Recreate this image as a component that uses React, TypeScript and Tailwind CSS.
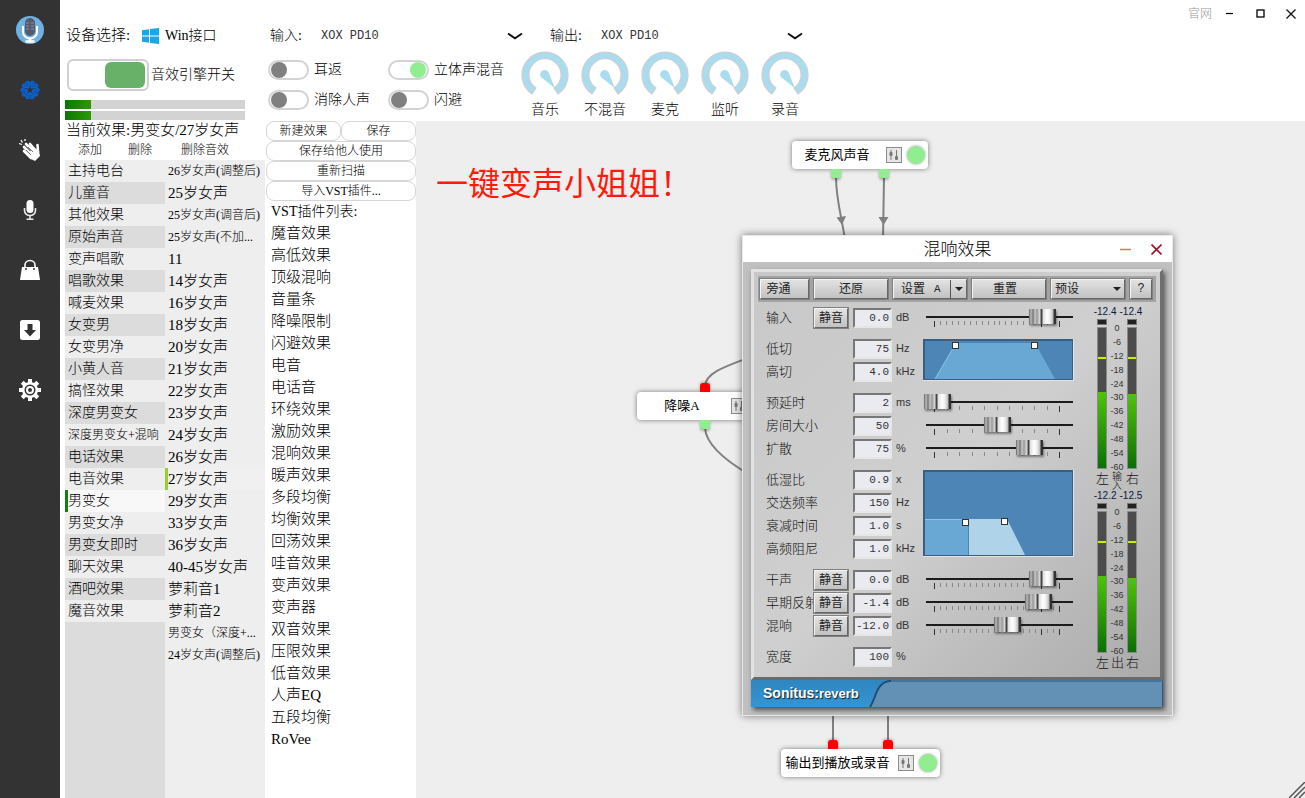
import { useState } from 'react';
import type { ReactNode } from 'react';

const categories = [
    '主持电台', '儿童音', '其他效果', '原始声音', '变声唱歌', '唱歌效果', '喊麦效果',
    '女变男', '女变男净', '小黄人音', '搞怪效果', '深度男变女', '深度男变女+混响', '电话效果',
    '电音效果', '男变女', '男变女净', '男变女即时', '聊天效果', '酒吧效果', '魔音效果',
];

const presets = [
    '26岁女声(调整后)', '25岁女声', '25岁女声(调音后)', '25岁女声(不加...', '11', '14岁女声', '16岁女声',
    '18岁女声', '20岁女声', '21岁女声', '22岁女声', '23岁女声', '24岁女声', '26岁女声',
    '27岁女声', '29岁女声', '33岁女声', '36岁女声', '40-45岁女声', '萝莉音1', '萝莉音2',
    '男变女（深度+...', '24岁女声(调整后)',
];

const plugins = [
    '魔音效果', '高低效果', '顶级混响', '音量条', '降噪限制', '闪避效果', '电音', '电话音',
    '环绕效果', '激励效果', '混响效果', '暖声效果', '多段均衡', '均衡效果', '回荡效果', '哇音效果',
    '变声效果', '变声器', '双音效果', '压限效果', '低音效果', '人声EQ', '五段均衡', 'RoVee',
];

const meterScale = [0, -6, -12, -18, -24, -30, -36, -42, -48, -54, -60];

function Sidebar() {
    const item = 'flex h-[60px] w-[60px] items-center justify-center';
    return (
        <nav className="w-[60px] shrink-0 bg-[#333333]">
            <button className={item} aria-label="logo">
                <svg width="28" height="28" viewBox="0 0 28 28">
                    <circle cx="14" cy="14" r="14" fill="#6fb2e2" />
                    <rect x="9" y="2" width="10" height="18" rx="5" fill="#555b6b" />
                    <path d="M10 7h3M15 7h3M10 10h3M15 10h3M10 13h3M15 13h3" stroke="#8b93a5" />
                    <path d="M7 10v6a7 6.500 0 0 0 14 0v-6" fill="none" stroke="#fff" strokeWidth="2" />
                    <path d="M14 22v3M9.500 25.500h9" stroke="#fff" strokeWidth="2.500" />
                </svg>
            </button>
            <button className={item} aria-label="effects">
                <svg width="22" height="22" viewBox="-11 -11 22 22">
                    {[36, 108, 180, 252, 324].map((a) => (
                        <g key={a} transform={`rotate(${a})`}>
                            <path d="M-.8 -2L-4.800 -6.500L-3.800 -9L-1.500 -9.300L0 -8.400L1.500 -9.300L3.800 -9L4.800 -6.500L.8 -2Z" fill="#0a62cc" />
                            <path d="M0 -4V-8.500M-1.200 -5L-2.300 -8M1.200 -5L2.300 -8" stroke="#123f78" strokeWidth=".5" />
                        </g>
                    ))}
                </svg>
            </button>
            <button className={item} aria-label="applause">
                <svg width="24" height="24" viewBox="0 0 24 24">
                    <g stroke="#fff" strokeLinecap="round" strokeWidth="2.600">
                        <path d="M6 13l7 7M6 9l9 9M8 6l9 9M12 6l7 8" />
                        <path d="M20 14l-.5-7" />
                    </g>
                    <path d="M10 15l6-5 5 3 1 5-5 5-4-2z" fill="#fff" />
                    <path d="M1 5.500l3 1M3 2l1.500 2.500M7 1v2" stroke="#fff" strokeWidth="1.300" />
                    <path d="M8 12l5 5M10 9l5 5" stroke="#333" strokeWidth=".7" />
                </svg>
            </button>
            <button className={item} aria-label="microphone">
                <svg width="14" height="22" viewBox="0 0 14 22">
                    <rect x="3.500" y="1" width="7" height="13" rx="3.500" fill="#fff" />
                    <path d="M1.500 9v2.500a5.500 5 0 0 0 11 0V9M7 17v3M3.500 20.300h7" fill="none" stroke="#e8e8e8" strokeWidth="1.600" />
                </svg>
            </button>
            <button className={item} aria-label="shop">
                <svg width="22" height="22" viewBox="0 0 22 22">
                    <path d="M3 8h16l2 13H1z" fill="#fff" />
                    <path d="M6 10V6a5 4.500 0 0 1 10 0v4" fill="none" stroke="#fff" strokeWidth="1.600" />
                    <circle cx="7" cy="10" r="1" fill="#333" />
                    <circle cx="15" cy="10" r="1" fill="#333" />
                </svg>
            </button>
            <button className={item} aria-label="download">
                <svg width="22" height="22" viewBox="0 0 22 22">
                    <rect x="1" y="1" width="20" height="20" rx="2.500" fill="#fff" />
                    <path d="M8.500 5h5v6H17l-6 6.500L5 11h3.500z" fill="#333" />
                </svg>
            </button>
            <button className={item} aria-label="settings">
                <svg width="24" height="24" viewBox="-12 -12 24 24">
                    {[0, 45, 90, 135].map((a) => (
                        <rect key={a} x="-2" y="-11" width="4" height="22" fill="#fff" transform={`rotate(${a})`} />
                    ))}
                    <circle r="8" fill="#fff" />
                    <circle r="5.500" fill="#333" />
                    <circle r="3" fill="none" stroke="#fff" strokeWidth="2" />
                </svg>
            </button>
        </nav>
    );
}

function LevelBar({ level }: { level: number }) {
    return (
        <div className="h-[9px] w-[180px] bg-[#d3d3d3]">
            <div className="h-full bg-linear-to-r from-[#067806] to-[#2c9a02]" style={{ width: `${level}%` }} />
        </div>
    );
}

function Toggle({ label, on = false }: { label: string; on?: boolean }) {
    return (
        <label className="flex h-5 items-center gap-[5px] whitespace-nowrap">
            <input type="checkbox" defaultChecked={on} className="peer sr-only" />
            <span className="flex h-5 w-[41px] items-center rounded-full border-2 border-[#d3d3d3] bg-white px-px peer-checked:justify-end peer-checked:[&>i]:bg-[#90ee90]">
                <i className="h-4 w-4 rounded-full bg-[#808080]" />
            </span>
            {label}
        </label>
    );
}

function DeviceSelect({ id, label }: { id: string; label: string }) {
    return (
        <div className="flex h-[18px] items-center">
            <label htmlFor={id} className="w-[51px]">{label}</label>
            <div className="relative flex w-[202px] items-center">
                <select id={id} className="w-full appearance-none bg-transparent font-['Liberation_Mono','Noto_Sans_CJK_SC',monospace] text-xs leading-[18px] text-[#333]">
                    <option>XOX PD10</option>
                </select>
                <svg className="pointer-events-none absolute right-0" width="16" height="8" viewBox="0 0 16 8">
                    <path d="M1 1.500L8 6.300L15 1.500" fill="none" stroke="#111" strokeWidth="2" />
                </svg>
            </div>
        </div>
    );
}

function Knob({ label }: { label: string }) {
    return (
        <div className="flex w-[60px] flex-col items-center">
            <svg width="48" height="48" viewBox="-24 -24 48 48">
                <path d="M-13 19A23 23 0 1 1 13 19L9 13A16 16 0 1 0 -9 13Z" fill="#a9dcef" stroke="#cfcfcf" strokeWidth="1.200" />
                <path d="M-3.600 2.600A4.500 4.500 0 1 1 3.900 -2L9.800 13Z" fill="#a9dcef" />
            </svg>
            <span className="leading-[22px]">{label}</span>
        </div>
    );
}

function Header() {
    return (
        <header className="bg-white text-sm">
            <div className="flex h-[27px] items-center justify-end pr-[9px]">
                <a href="#site" className="mr-[14px] text-xs text-[#999]">官网</a>
                <button className="w-[30px]" aria-label="minimize">
                    <svg width="8" height="12" viewBox="0 0 8 12"><path d="M0 5.500h7" stroke="#000" strokeWidth="1.200" /></svg>
                </button>
                <button className="w-[30px]" aria-label="maximize">
                    <svg width="10" height="10" viewBox="0 0 10 10"><rect x="1" y="1" width="7" height="7" fill="none" stroke="#000" strokeWidth="1.300" /></svg>
                </button>
                <button aria-label="close">
                    <svg width="10" height="10" viewBox="0 0 10 10"><path d="M.5 .5l9 9M9.500 .5l-9 9" stroke="#111" strokeWidth="1.300" /></svg>
                </button>
            </div>
            <div className="flex">
                <div className="w-[205px] shrink-0 pl-[5px]">
                    <div className="flex h-[18px] items-center">
                        <span className="w-[77px] pl-px text-[15px]">设备选择:</span>
                        <svg width="17" height="16" viewBox="0 0 17 16" fill="#18a8ea">
                            <path d="M0 2.300L7 1.300V7.500H0zM8 1.100L17 0V7.500H8zM0 8.500H7V14.700L0 13.700zM8 8.500H17V16L8 14.900z" />
                        </svg>
                        <span className="ml-[6px]">Win接口</span>
                    </div>
                    <label className="mt-[14px] flex items-center gap-[2px] pl-[2px]">
                        <input type="checkbox" defaultChecked className="peer sr-only" />
                        <span className="flex h-8 w-[82px] items-center rounded-md border-2 border-[#d0d0d0] bg-white px-[2px] peer-checked:justify-end">
                            <i className="h-[26px] w-10 rounded-md bg-[#68b168]" />
                        </span>
                        音效引擎开关
                    </label>
                    <div className="mt-[9px] flex flex-col gap-[2px]">
                        <LevelBar level={14.5} />
                        <LevelBar level={14.5} />
                    </div>
                </div>
                <div>
                    <div className="flex gap-[27px] pl-[5px]">
                        <DeviceSelect id="in" label="输入:" />
                        <DeviceSelect id="out" label="输出:" />
                    </div>
                    <div className="flex pt-[6px] pl-[3px]">
                        <div className="grid grid-cols-[120px_127px] content-start gap-y-[10px] pt-[9px]">
                            <Toggle label="耳返" />
                            <Toggle label="立体声混音" on />
                            <Toggle label="消除人声" />
                            <Toggle label="闪避" />
                        </div>
                        {['音乐', '不混音', '麦克', '监听', '录音'].map((k) => <Knob key={k} label={k} />)}
                    </div>
                </div>
            </div>
        </header>
    );
}

function EffectLists() {
    const [category, setCategory] = useState(15);
    const [preset, setPreset] = useState(14);
    return (
        <section className="flex w-[205px] shrink-0 flex-col bg-white pl-[5px]">
            <p className="pl-px text-[15px] leading-[19px] whitespace-nowrap">当前效果:男变女/27岁女声</p>
            <div className="flex h-5 items-center text-xs">
                <button className="w-[50px]">添加</button>
                <button className="w-[50px]">删除</button>
                <button className="ml-4 w-12 whitespace-nowrap">删除音效</button>
            </div>
            <div className="flex flex-1">
                <ul className="w-[100px] bg-[#dcdcdc] text-sm leading-[22px]">
                    {categories.map((c, i) => (
                        <li key={c}>
                            <button
                                onClick={() => setCategory(i)}
                                className={`block h-[22px] w-full overflow-hidden border-l-[3px] text-left whitespace-nowrap ${i === category ? 'border-[#0f820f] bg-[#f8f8f8]' : i % 2 ? 'border-transparent bg-[#dcdcdc]' : 'border-transparent bg-[#eeeeee]'} ${c.length > 6 ? 'text-xs leading-[22px]' : ''}`}
                            >
                                {c}
                            </button>
                        </li>
                    ))}
                </ul>
                <ul className="w-[100px] bg-[#eeeeee] text-[15px] leading-[22px]">
                    {presets.map((p, i) => (
                        <li key={i}>
                            <button
                                onClick={() => setPreset(i)}
                                className={`block h-[22px] w-full border-l-[3px] text-left whitespace-nowrap ${i === preset ? 'border-[#9acd32] bg-[#f0f0f0]' : 'border-transparent'} ${p.length > 8 ? 'text-xs leading-[22px]' : ''}`}
                            >
                                {p}
                            </button>
                        </li>
                    ))}
                </ul>
            </div>
        </section>
    );
}

function PluginList() {
    const btn = 'h-5 rounded-lg border border-[#d6d6d6] bg-white leading-[18px]';
    return (
        <section className="w-[151px] shrink-0 bg-white">
            <div className="grid grid-cols-2 pl-px text-xs">
                <button className={btn}>新建效果</button>
                <button className={btn}>保存</button>
                <button className={`${btn} col-span-2`}>保存给他人使用</button>
                <button className={`${btn} col-span-2`}>重新扫描</button>
                <button className={`${btn} col-span-2`}>导入VST插件...</button>
            </div>
            <h2 className="pl-[6px] text-sm leading-[21px]">VST插件列表:</h2>
            <ul className="pl-[6px] text-[15px]">
                {plugins.map((p) => (
                    <li key={p} className="h-[22px] leading-[22px]">{p}</li>
                ))}
            </ul>
        </section>
    );
}

interface NodeProps {
    title: string;
    place: string;
    children?: ReactNode;
}

function GraphNode({ title, place, children }: NodeProps) {
    return (
        <div className={`absolute flex h-7 items-center rounded-[4px] bg-white text-[13px] font-normal shadow-[0_0_5px_rgba(0,0,0,0.5)] ${place}`}>
            <span className="flex-1 pr-1 text-center whitespace-nowrap">{title}</span>
            <svg className="shrink-0" width="16" height="16" viewBox="0 0 16 16">
                <rect x=".5" y=".5" width="15" height="15" fill="#e6e6e6" stroke="#8c8c8c" />
                <path d="M5 3v10M10.500 3v10" stroke="#777" />
                <rect x="3.500" y="5" width="3" height="4" rx="1" fill="#777" />
                <rect x="9" y="9" width="3" height="4" rx="1" fill="#777" />
            </svg>
            <i className="mr-[3px] ml-[5px] h-[18px] w-[18px] shrink-0 rounded-full bg-[#90ee90] shadow-[0_0_3px_rgba(0,0,0,0.4)]" />
            {children}
        </div>
    );
}

const outPort = 'absolute top-full h-[9px] w-[10px] rounded-b-[3px] bg-[#90ee90] shadow-[0_2px_3px_rgba(0,0,0,0.3)]';
const inPort = 'absolute bottom-full h-[9px] w-[10px] rounded-t-[3px] bg-[#ff0000] shadow-[0_-1px_3px_rgba(0,0,0,0.3)]';
const bevel = 'border border-t-[#f4f4f4] border-l-[#f4f4f4] border-r-[#666] border-b-[#666] bg-linear-to-b from-[#e2e2e2] to-[#c2c2c2] shadow-[0_0_0_1px_#808080]';

function Ticks({ count, marks }: { count: number; marks: number[] }) {
    const step = 125 / count;
    return (
        <svg className="ml-[5px] block" width="147" height="6" viewBox="0 0 147 6">
            {Array.from({ length: count + 1 }, (_, i) => {
                const long = marks.includes(i);
                return <rect key={i} x={Math.round(8 + i * step)} y="0" width="1" height={long ? 6 : 4} fill={long ? '#333' : '#888'} />;
            })}
        </svg>
    );
}

function Slider({ label, value, fine = false }: { label: string; value: number; fine?: boolean }) {
    return (
        <div className="h-[23px] pt-[3px]">
            <input
                type="range"
                aria-label={label}
                defaultValue={value}
                className="relative z-10 -mb-1 block h-4 w-[152px] appearance-none bg-transparent [&::-webkit-slider-runnable-track]:h-[2px] [&::-webkit-slider-runnable-track]:bg-[linear-gradient(to_right,transparent_5px,#1c1c1c_5px)] [&::-webkit-slider-thumb]:-mt-[7px] [&::-webkit-slider-thumb]:h-[15px] [&::-webkit-slider-thumb]:w-[27px] [&::-webkit-slider-thumb]:appearance-none [&::-webkit-slider-thumb]:bg-[linear-gradient(to_right,#666_0,#bbb_2px,#777_4px,#c8c8c8_6px,#999_8px,#e0e0e0_11px,#444_12px,#444_13px,#ddd_14px,#fff_18px,#eee_21px,#bbb_24px,#333_25px)] [&::-webkit-slider-thumb]:shadow-[1px_2px_2px_rgba(0,0,0,0.4)]"
            />
            {fine ? <Ticks count={21} marks={[0, 18, 21]} /> : <Ticks count={10} marks={[0, 10]} />}
        </div>
    );
}

interface ParamProps {
    label: string;
    value: string;
    unit: string;
    mute?: boolean;
}

function Param({ label, value, unit, mute }: ParamProps) {
    return (
        <div className="flex h-[23px] items-center">
            <label htmlFor={label} className="w-12 text-[13px] whitespace-nowrap text-[#111]">{label}</label>
            <div className="w-[39px]">
                {mute && <button className={`relative block h-5 w-[34px] text-xs leading-4 font-normal text-[#222] ${bevel}`}>静音</button>}
            </div>
            <input
                id={label}
                defaultValue={value}
                className="h-5 w-[39px] border-2 border-t-[#777] border-r-[#e6e6e6] border-b-[#e6e6e6] border-l-[#777] bg-[#e9ebf0] pr-px text-right font-['Liberation_Mono',monospace] text-[11px] text-[#333]"
            />
            <span className="w-[29px] pl-1 font-['Liberation_Sans',sans-serif] text-[11px] text-[#333]">{unit}</span>
        </div>
    );
}

function LowHighGraph() {
    return (
        <svg className="mt-[2px] ml-[2px] block" width="151" height="42" viewBox="0 0 151 42">
            <rect width="151" height="42" fill="#e4e4e4" />
            <rect width="150" height="41" fill="#375f83" />
            <rect x="2" y="2" width="147" height="38" fill="#4d86b6" />
            <path d="M12 40L33 4H112L132 40Z" fill="#69a8d4" />
            <path d="M12 40L33 4" stroke="#8fc3e6" />
            <rect x="29.500" y="3.500" width="6" height="6" fill="#fff" stroke="#333" />
            <rect x="108.500" y="3.500" width="6" height="6" fill="#fff" stroke="#333" />
        </svg>
    );
}

function DampingGraph() {
    return (
        <svg className="mt-[2px] ml-[2px] block" width="151" height="87" viewBox="0 0 151 87">
            <rect width="151" height="87" fill="#e4e4e4" />
            <rect width="150" height="86" fill="#375f83" />
            <rect x="2" y="2" width="147" height="83" fill="#4d86b6" />
            <rect x="2" y="50" width="43" height="35" fill="#69a8d4" />
            <path d="M2 49.500H45" stroke="#8fc3e6" />
            <path d="M46 85V49H84L102 85Z" fill="#afd3e8" />
            <rect x="39.500" y="49.500" width="6" height="6" fill="#fff" stroke="#333" />
            <rect x="78.500" y="48.500" width="6" height="6" fill="#fff" stroke="#333" />
        </svg>
    );
}

function MeterBar({ level, peak }: { level: number; peak: number }) {
    return (
        <div className="w-[10px]">
            <div className="mb-[2px] h-[6px] border border-[#777] bg-[#222]" />
            <div className="relative flex h-[142px] flex-col justify-end border border-[#8a8a8a] bg-[#4c4c4c]">
                <div className="bg-linear-to-b from-[#4fc408] to-[#067006]" style={{ height: `${level}%` }} />
                <div className="absolute inset-x-0 h-[2px] bg-[#c8f000]" style={{ top: `${peak}%` }} />
            </div>
        </div>
    );
}

function Meter({ left, right, caption }: { left: string; right: string; caption: string }) {
    return (
        <div className="h-[184px] w-12 font-['Liberation_Sans','Noto_Sans_CJK_SC',sans-serif]">
            <div className="flex h-[13px] justify-center gap-[3px] text-[10px] leading-3 text-[#0a1a3c]">
                <span>{left}</span>
                <span>{right}</span>
            </div>
            <div className="flex justify-between pr-[5px] pl-[3px]">
                <MeterBar level={54} peak={21} />
                <div className="flex h-[153px] flex-col justify-between pt-[5px] text-center text-[9px] leading-[9px] text-[#333]">
                    {meterScale.map((s) => <span key={s}>{s}</span>)}
                </div>
                <MeterBar level={53} peak={21} />
            </div>
            <div className="flex justify-between pr-[3px] pl-[2px] text-[13px] leading-[14px] text-[#111]">
                <span>左</span>
                <span className={caption.length > 1 ? 'w-[11px] text-[10px] leading-[9px]' : 'w-[13px]'}>{caption}</span>
                <span>右</span>
            </div>
        </div>
    );
}

function ReverbWindow() {
    return (
        <div className="absolute top-[114px] left-[326px] z-20 w-[431px] border border-[#e8e8e8] bg-[#c0c0c0] shadow-[0_0_8px_rgba(0,0,0,0.5)]">
            <div className="relative flex h-[26px] items-center justify-end gap-5 bg-white pr-[10px]">
                <h3 className="absolute inset-x-0 text-center text-[17px] leading-[27px]">混响效果</h3>
                <button className="relative" aria-label="minimize window">
                    <svg width="11" height="11" viewBox="0 0 11 11"><path d="M0 5.500h11" stroke="#bd8a35" strokeWidth="1.500" /></svg>
                </button>
                <button className="relative" aria-label="close window">
                    <svg width="11" height="11" viewBox="0 0 11 11"><path d="M.5 .5l10 10M10.500 .5l-10 10" stroke="#a3142a" strokeWidth="1.600" /></svg>
                </button>
            </div>
            <div className="pt-[7px] pr-[9px] pb-2 pl-2">
                <div className="shadow-[2px_3px_5px_rgba(0,0,0,0.6)]">
                    <div className="border-[3px] border-t-[#e2e2e2] border-r-[#6f6f6f] border-b-[#6a6a6a] border-l-[#e2e2e2] bg-linear-to-br from-[#c8c8c8] via-[#cfcfcf] to-[#aaaaaa] p-1">
                        <div className="flex h-[26px] gap-[5px] bg-[#a3a3a3] px-[2px] py-[3px] text-xs leading-[18px] font-normal text-[#222]">
                            <button className={`w-[49px] pr-3 ${bevel}`}>旁通</button>
                            <button className={`w-[74px] ${bevel}`}>还原</button>
                            <div className={`flex w-[74px] items-center pl-[7px] ${bevel}`}>
                                <label htmlFor="slot" className="flex-1">设置</label>
                                <select id="slot" className="w-[16px] appearance-none bg-transparent font-['Liberation_Mono',monospace] text-[11px]">
                                    <option>A</option>
                                </select>
                                <i className="flex h-full w-4 items-center justify-center border-l border-[#555]">
                                    <svg width="8" height="4" viewBox="0 0 8 4"><path d="M0 0h8L4 4z" fill="#222" /></svg>
                                </i>
                            </div>
                            <button className={`w-[74px] pr-2 ${bevel}`}>重置</button>
                            <div className={`flex w-[74px] items-center px-[3px] ${bevel}`}>
                                <select aria-label="预设" className="flex-1 appearance-none bg-transparent">
                                    <option>预设</option>
                                </select>
                                <svg width="8" height="4" viewBox="0 0 8 4"><path d="M0 0h8L4 4z" fill="#222" /></svg>
                            </div>
                            <button className={`w-[22px] font-['Liberation_Mono',monospace] ${bevel}`}>?</button>
                        </div>
                        <div className="flex justify-between pt-1 pr-[14px] pb-[5px] pl-2">
                            <div className="flex flex-col gap-2">
                                <div className="flex">
                                    <Param label="输入" value="0.0" unit="dB" mute />
                                    <Slider label="输入电平" value={86} fine />
                                </div>
                                <div className="flex">
                                    <div>
                                        <Param label="低切" value="75" unit="Hz" />
                                        <Param label="高切" value="4.0" unit="kHz" />
                                    </div>
                                    <LowHighGraph />
                                </div>
                                <div className="flex">
                                    <div>
                                        <Param label="预延时" value="2" unit="ms" />
                                        <Param label="房间大小" value="50" unit="" />
                                        <Param label="扩散" value="75" unit="%" />
                                    </div>
                                    <div>
                                        <Slider label="预延时调节" value={2} />
                                        <Slider label="房间大小调节" value={50} />
                                        <Slider label="扩散调节" value={76} />
                                    </div>
                                </div>
                                <div className="flex">
                                    <div>
                                        <Param label="低湿比" value="0.9" unit="x" />
                                        <Param label="交迭频率" value="150" unit="Hz" />
                                        <Param label="衰减时间" value="1.0" unit="s" />
                                        <Param label="高频阻尼" value="1.0" unit="kHz" />
                                    </div>
                                    <DampingGraph />
                                </div>
                                <div className="flex">
                                    <div>
                                        <Param label="干声" value="0.0" unit="dB" mute />
                                        <Param label="早期反射" value="-1.4" unit="dB" mute />
                                        <Param label="混响" value="-12.0" unit="dB" mute />
                                    </div>
                                    <div>
                                        <Slider label="干声调节" value={86} fine />
                                        <Slider label="早期反射调节" value={83} fine />
                                        <Slider label="混响调节" value={58} fine />
                                    </div>
                                </div>
                                <Param label="宽度" value="100" unit="%" />
                            </div>
                            <div className="-mb-2">
                                <Meter left="-12.4" right="-12.4" caption="输入" />
                                <Meter left="-12.2" right="-12.5" caption="出" />
                            </div>
                        </div>
                    </div>
                    <div className="flex h-[27px] bg-linear-to-b from-[#2f86c0] to-[#3595d2]">
                        <span className="pl-3 font-['Liberation_Sans',sans-serif] text-[13px] leading-[27px] font-bold text-white [text-shadow:1px_1px_1px_#123]"><span className="text-sm leading-[27px]">Sonitus:</span>reverb</span>
                        <svg className="ml-[10px] block" width="22" height="27" viewBox="0 0 22 27">
                            <path d="M0 27C6 18 6 2 20 0H22V27Z" fill="#6390b5" />
                            <path d="M1 27C7 18 7 3 20 1H22" fill="none" stroke="#1d4f7c" strokeWidth="2" />
                        </svg>
                        <div className="flex-1 border-t-2 border-r border-t-[#47729a] border-r-[#2b5a86] bg-[#6390b5]" />
                    </div>
                </div>
            </div>
        </div>
    );
}

function Canvas() {
    return (
        <main className="relative flex-1 overflow-hidden bg-[#eeeeee]">
            <svg className="absolute top-0 left-0" width="640" height="640" viewBox="416 121 640 640">
                <g fill="none" stroke="#808080" strokeWidth="2">
                    <path d="M836 177C836 200 842 218 845 240M884 177L883 240" />
                    <path d="M705 386C706 373 724 367 748 358M705 428C706 445 726 461 750 475" />
                    <path d="M833 710V745M888 710V745" />
                </g>
                <path d="M836.500 217.500L846 216L842 225ZM878.500 217H888.500L883.500 225Z" fill="#808080" />
            </svg>
            <p className="absolute top-9 left-[20px] font-['Noto_Sans_CJK_SC',sans-serif] text-[32px] leading-[48px] font-normal whitespace-nowrap text-[#ff1a0c]">一键变声小姐姐！</p>
            <GraphNode title="麦克风声音" place="left-[376px] top-5 w-[136px]">
                <i className={`${outPort} left-[39px]`} />
                <i className={`${outPort} left-[87px]`} />
            </GraphNode>
            <GraphNode title="降噪A" place="left-[221px] top-[271px] w-[136px]">
                <i className={`${inPort} left-[63px]`} />
                <i className={`${outPort} left-[63px]`} />
            </GraphNode>
            <GraphNode title="输出到播放或录音" place="left-[365px] top-[628px] w-[159px]">
                <i className={`${inPort} left-[47px]`} />
                <i className={`${inPort} left-[102px]`} />
            </GraphNode>
            <ReverbWindow />
            <svg className="absolute right-0 bottom-0" width="16" height="16" viewBox="0 0 16 16">
                <path d="M0 16L16 0M5 16L16 5M10 16L16 10" stroke="#555" strokeWidth="1.500" />
            </svg>
        </main>
    );
}

export default function App() {
    return (
        <div className="flex min-h-screen bg-white font-['Liberation_Serif','Noto_Sans_CJK_SC',serif] font-light text-black">
            <Sidebar />
            <div className="flex min-w-0 flex-1 flex-col">
                <Header />
                <div className="flex flex-1">
                    <EffectLists />
                    <PluginList />
                    <Canvas />
                </div>
            </div>
        </div>
    );
}
